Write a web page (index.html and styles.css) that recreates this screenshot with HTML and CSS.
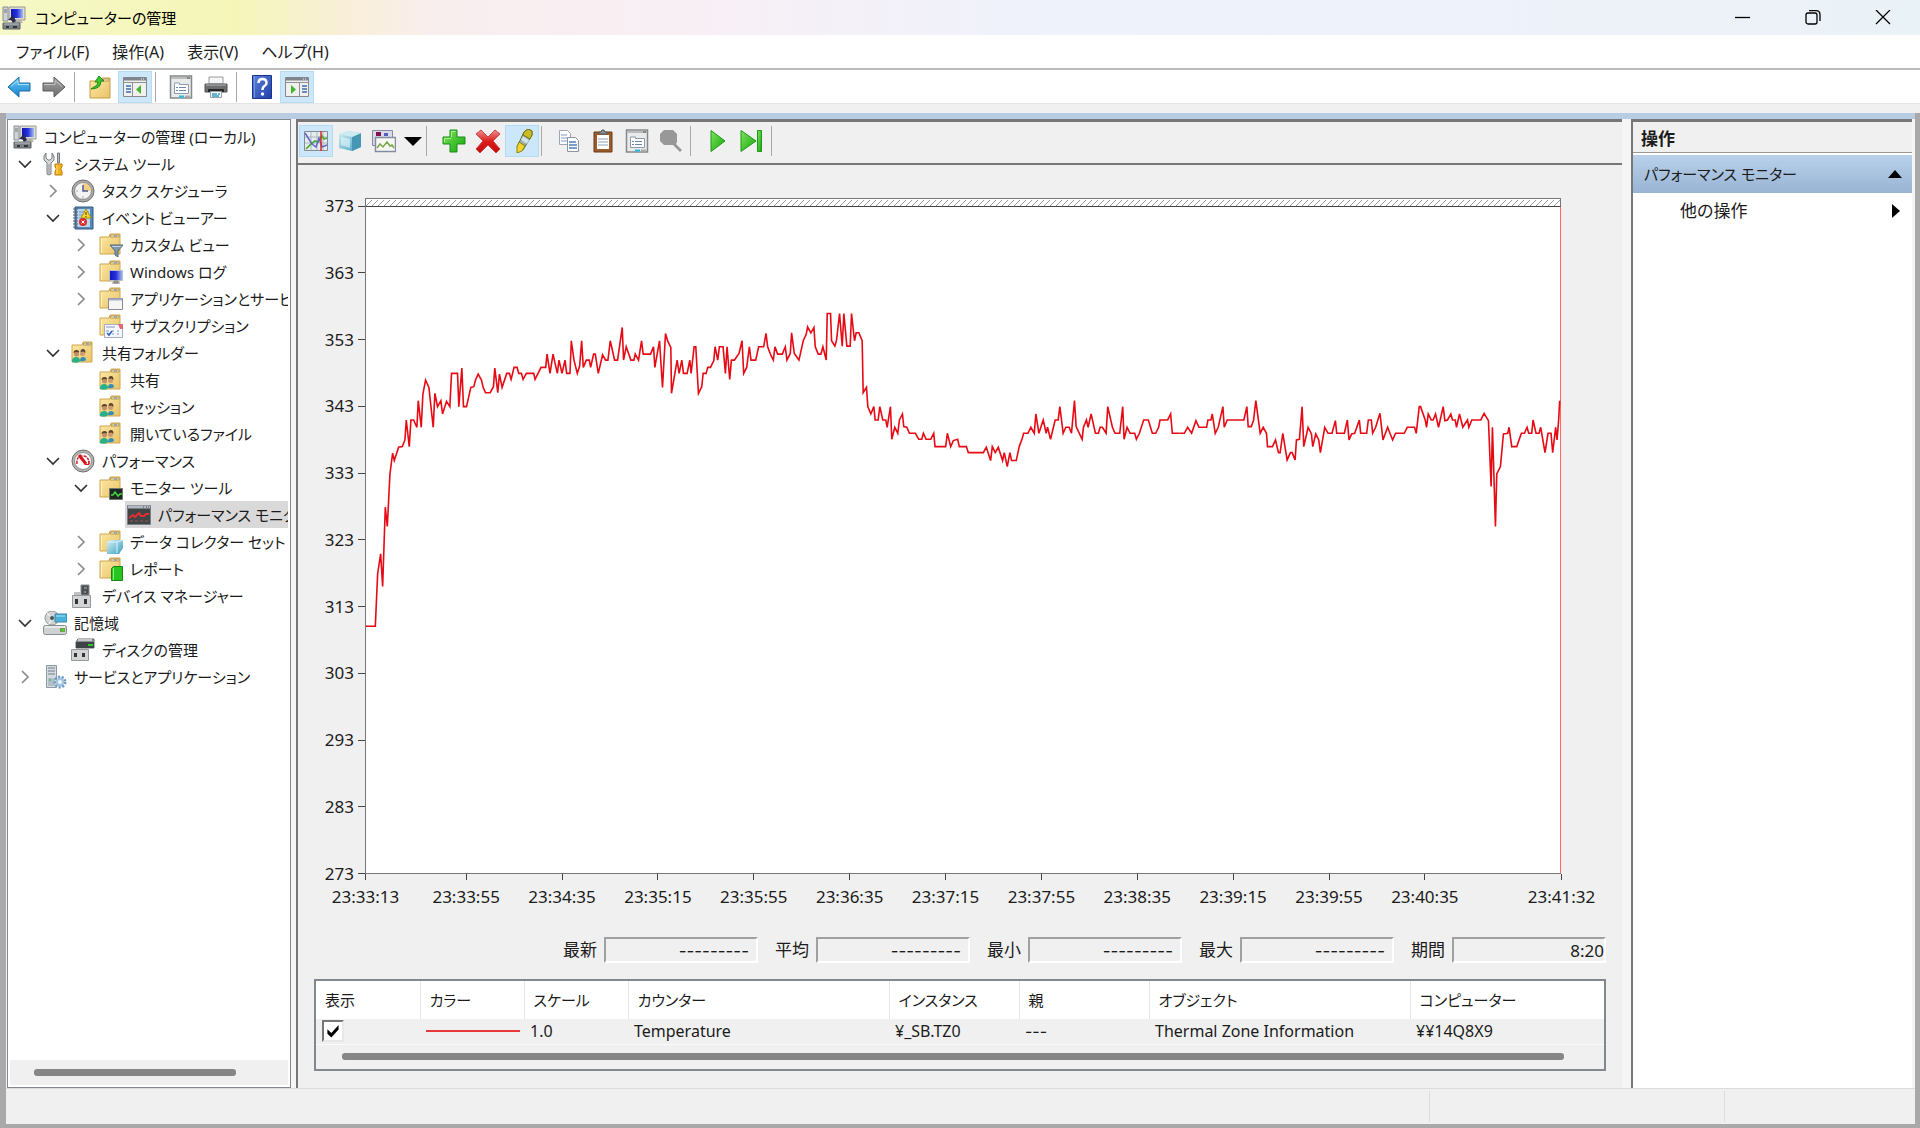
FILE: index.html
```html
<!DOCTYPE html>
<html lang="ja">
<head>
<meta charset="utf-8">
<title>コンピューターの管理</title>
<link rel="stylesheet" href="styles.css">
</head>
<body>
<svg class="sprite" aria-hidden="true">
  <defs>
    <linearGradient id="gFolder" x1="0" y1="0" x2="1" y2="1"><stop offset="0" stop-color="#fdeaa5"/><stop offset="1" stop-color="#e8c268"/></linearGradient>
    <linearGradient id="gScreen" x1="0" y1="0" x2="1" y2="0"><stop offset="0" stop-color="#0e16b8"/><stop offset="0.5" stop-color="#2733d8"/><stop offset="1" stop-color="#a9bdf4"/></linearGradient>
    <linearGradient id="gBlue" x1="0" y1="0" x2="0" y2="1"><stop offset="0" stop-color="#6cc8f4"/><stop offset="1" stop-color="#1583d0"/></linearGradient>
    <linearGradient id="gGrey" x1="0" y1="0" x2="0" y2="1"><stop offset="0" stop-color="#a5a5a5"/><stop offset="1" stop-color="#6d6d6d"/></linearGradient>
    <linearGradient id="gGreen" x1="0" y1="0" x2="1" y2="1"><stop offset="0" stop-color="#7fe45c"/><stop offset="1" stop-color="#14a50c"/></linearGradient>
    <linearGradient id="gRed" x1="0" y1="0" x2="0" y2="1"><stop offset="0" stop-color="#f09090"/><stop offset="0.5" stop-color="#dc1c1c"/><stop offset="1" stop-color="#c40c0c"/></linearGradient>
    <linearGradient id="gCube" x1="0" y1="0" x2="1" y2="1"><stop offset="0" stop-color="#d6f0f6"/><stop offset="1" stop-color="#3a9fc0"/></linearGradient>
    <linearGradient id="gHelp" x1="0" y1="0" x2="1" y2="1"><stop offset="0" stop-color="#5f86dc"/><stop offset="1" stop-color="#1f3ea8"/></linearGradient>
  </defs>
  <symbol id="computer" viewBox="0 0 24 24">
    <path d="M1 1h5v14H1z" fill="#cfd3d6" stroke="#8b9094"/><path d="M2 4h3M2 6h3" stroke="#777"/>
    <path d="M7 1h16v13H7z" fill="#dcdcd4" stroke="#9a9a92"/><path d="M9 3h12v9H9z" fill="url(#gScreen)"/><path d="M12 14h7l2 3H10z" fill="#b4b4ac"/>
    <path d="M6 14l5-5 3 6-3 2-2-3z" fill="#282c50"/><path d="M1 17h17v6H1z" fill="#7d8386" stroke="#5d6366"/><path d="M2 18h15" stroke="#b9bec0"/><path d="M4 20h3v2H4zm7 0h4v2h-4z" fill="#323639"/>
  </symbol>
  <symbol id="tools" viewBox="0 0 24 24">
    <path d="M3 1v5l2 2h2l2-2V1l2 3v4l-3 3v11q-2 2-4 0V11L1 8V4z" fill="#d5d8da" stroke="#7a7f83"/><path d="M6 12v10" stroke="#8e9498"/>
    <path d="M14.500 1h2v10h-2z" fill="#b9bdc0" stroke="#74797c"/><path d="M12 12h7v3l-1 1v2l1 1v4h-7v-4l1-1v-2l-1-1z" fill="#f6b21b" stroke="#b87c0a"/><path d="M14 13v9" stroke="#ffe08a"/>
  </symbol>
  <symbol id="clock" viewBox="0 0 24 24">
    <circle cx="12" cy="12" r="11" fill="#ababab" stroke="#707070"/><circle cx="12" cy="12" r="8.500" fill="#f3f3f3" stroke="#8b8b8b"/><path d="M12 12V4a8 8 0 0 1 8 8z" fill="#f3cf84"/><path d="M12 6v6h5" fill="none" stroke="#4c5c92" stroke-width="1.500"/><path d="M12 17v3M5 12h2" stroke="#aaa"/>
  </symbol>
  <symbol id="events" viewBox="0 0 24 24">
    <path d="M4 1h18v22H4z" fill="#5588b8" stroke="#35597e"/><path d="M6 3h13v18H6z" fill="#b9d3ea"/><path d="M2 3h5M2 6h5M2 9h5M2 12h5M2 15h5M2 18h5M2 21h5" stroke="#54606c"/><path d="M8 6h10M8 9h10M8 12h10" stroke="#749cc4"/>
    <path d="M15 3l5 9H10z" fill="#fadc28" stroke="#b19205"/><path d="M15 6v3M15 10v1" stroke="#333"/><circle cx="12" cy="16" r="4" fill="#dc2b2b"/><path d="M10.500 14.500l3 3m0-3l-3 3" stroke="#fff"/>
  </symbol>
  <symbol id="folder" viewBox="0 0 24 24">
    <path d="M1 4h9l1-3h10v20H1z" fill="url(#gFolder)" stroke="#cfa750"/><path d="M11 4h9V2h-8z" fill="#fff6d4" stroke="#b59552"/><path d="M15 3h3" stroke="#5e8ab8"/><path d="M2.500 6v14" stroke="#fff3c2"/>
  </symbol>
  <symbol id="folder-filter" viewBox="0 0 24 24"><use href="#folder"/><path d="M11 12h13l-5 6v6l-3-2v-4z" fill="#7d97ab" stroke="#566c7d"/><path d="M13 13.500h9" stroke="#c6d6e2"/></symbol>
  <symbol id="folder-screen" viewBox="0 0 24 24"><use href="#folder"/><path d="M10.500 10.500h13v10h-13z" fill="url(#gScreen)" stroke="#b8bec8"/><path d="M15 21h4v2h-4zM13 23h8" fill="#999" stroke="#888"/></symbol>
  <symbol id="folder-window" viewBox="0 0 24 24"><use href="#folder"/><path d="M9.500 11.500h14v11h-14z" fill="#f6f6f4" stroke="#888a9a"/><path d="M10 12.500h13" stroke="#a6acc8" stroke-width="2"/></symbol>
  <symbol id="folder-sheet" viewBox="0 0 24 24"><use href="#folder"/><path d="M5.500 10.500h18v13h-18z" fill="#f5f8fc" stroke="#a5afbd"/><path d="M7 13h9M7 17h3m3 0h2m3 0h2M13 20h2m3 0h2" stroke="#8493c9"/><path d="M19 10h5v5h-3z" fill="#e56a70"/><path d="M8 19l2 2 3-4" fill="none" stroke="#285bc4" stroke-width="1.500"/></symbol>
  <symbol id="folder-share" viewBox="0 0 24 24"><path d="M1 4h10l1-3h9v20H1z" fill="url(#gFolder)" stroke="#cfa750"/><path d="M12 4h8V2h-7z" fill="#fff6d4" stroke="#b59552"/><path d="M15 3h3" stroke="#5e8ab8"/><path d="M1 19q1-3 4-3 4 0 4 4-2 3-8 1z" fill="#28b088"/><path d="M9 20q0-4 3-4t3 3q-2 2-6 1z" fill="#338fb6"/><circle cx="5.500" cy="13" r="2.500" fill="#c09068"/><circle cx="11.500" cy="12.500" r="2.500" fill="#cc9a6b"/><path d="M2.500 12q0-3 3-3t2.500 2.500L5 11zm7-1q0-3 2.500-3t2.500 4l-2-1.500z" fill="#5a4330"/></symbol>
  <symbol id="gauge" viewBox="0 0 24 24"><circle cx="12" cy="12" r="11" fill="#b5b5b5" stroke="#6f6f6f"/><circle cx="12" cy="12" r="8.500" fill="#fff" stroke="#8c8c8c"/><path d="M6 15q-1-8 6-8 6 0 6 8" fill="none" stroke="#c5262a" stroke-width="1.500" stroke-dasharray="3 1"/><path d="M8 6l7 9" stroke="#d8141a" stroke-width="3"/><path d="M14 15.500h4v-4" fill="none" stroke="#d8141a"/></symbol>
  <symbol id="folder-monitor" viewBox="0 0 24 24"><use href="#folder"/><path d="M10.500 12.500h13v11h-13z" fill="#1e2822" stroke="#727674"/><path d="M12 19h2l2-3 3 4 2-2h2" fill="none" stroke="#44d83c" stroke-width="1.500"/></symbol>
  <symbol id="perfmon" viewBox="0 0 24 24"><path d="M.5 2.500h23v19H.5z" fill="#3f4444" stroke="#7b7f88"/><path d="M1 4h22" stroke="#b4b8c4" stroke-width="3"/><path d="M16 4h1m2 0h1m1 0h1" stroke="#4d5260"/><path d="M2 15l4-3 2 2 4-4 2 3h3l2-2h3" fill="none" stroke="#e22d35" stroke-width="2"/><path d="M3 18h3m2 0h3m2 0h3m2 0h3" stroke="#a35454"/></symbol>
  <symbol id="folder-data" viewBox="0 0 24 24"><use href="#folder"/><path d="M8 12l4-2h12v8l-4 6H8z" fill="url(#gCube)"/><path d="M8 12h10v11M18 12l6-2" fill="none" stroke="#daf2fa"/></symbol>
  <symbol id="folder-report" viewBox="0 0 24 24"><use href="#folder"/><path d="M12.500 11.500l2-2h9v14h-11z" fill="#28c420" stroke="#168812"/><path d="M14.500 11v12" stroke="#8bf07b"/></symbol>
  <symbol id="device" viewBox="0 0 24 24"><path d="M10 1h8v10h-8z" fill="#4b5154" stroke="#85898b"/><path d="M13 4h3M13 8h2" stroke="#b8bec0"/><path d="M1.500 11.500h18v12h-18z" fill="#d3d4d6" stroke="#96989b"/><path d="M3 8h6v3H3z" fill="#bfc2c4"/><path d="M4 15h3v5H4zm9 0h3v5h-3z" fill="#313538"/></symbol>
  <symbol id="storage" viewBox="0 0 24 24"><circle cx="9" cy="7" r="7" fill="#d1d5d2" stroke="#91979a"/><path d="M9 7L4 2m5 5l-3 6" stroke="#fff"/><circle cx="9" cy="7" r="2" fill="#49565d"/><path d="M12 3h12v8H12z" fill="#48b1dc" stroke="#4384a6"/><path d="M13 5h9" stroke="#a6e4fb"/><rect x="0.500" y="14.500" width="23" height="9" rx="2" fill="#cfd2d3" stroke="#888d90"/><path d="M2 16h20" stroke="#fff"/><path d="M17 17h5v4h-5z" fill="#729f4b"/><path d="M19 18h2v2h-2z" fill="#41e21f"/></symbol>
  <symbol id="disk" viewBox="0 0 24 24"><path d="M5 4l2-3h16v9H5z" fill="#898e90" stroke="#666b6d"/><path d="M5 4h18v6H5z" fill="#3e4345"/><path d="M7 2h14" stroke="#c5c8ca" stroke-width="2"/><path d="M17 7h5" stroke="#31c634" stroke-width="2"/><path d="M.5 11.500h17v11H.5z" fill="#d3d4d6" stroke="#96989b"/><path d="M3 15h3v4H3zm8 0h3v4h-3z" fill="#313538"/></symbol>
  <symbol id="services" viewBox="0 0 24 24"><path d="M3.500.5h10v22h-10z" fill="#d5dce1" stroke="#8c99a3"/><path d="M5 3h7M5 6h7M5 9h7" stroke="#6e7c86"/><path d="M5 13h7v8H5z" fill="#b1bfc9"/><path d="M6 15h2" stroke="#2db53a"/><circle cx="17" cy="17" r="5" fill="#c9dcec" stroke="#6f9dc1" stroke-width="3" stroke-dasharray="2 1.500"/><circle cx="17" cy="17" r="4" fill="#a5c5de"/><circle cx="17" cy="17" r="2" fill="#f3f8fc"/></symbol>
  <symbol id="arrow-left" viewBox="0 0 24 24"><path d="M1 12L12 2v6h11v8H12v6z" fill="url(#gBlue)" stroke="#1a6fa6"/><path d="M4 11.500l7-6v4h11" fill="none" stroke="#a6e0fa"/></symbol>
  <symbol id="arrow-right" viewBox="0 0 24 24"><path d="M23 12L12 2v6H1v8h11v6z" fill="url(#gGrey)" stroke="#5b5b5b"/><path d="M2 9.500h11v-4l7 6" fill="none" stroke="#c4c4c4"/></symbol>
  <symbol id="folder-up" viewBox="0 0 24 24"><path d="M2 6h10l2-3h8v20H2z" fill="url(#gFolder)" stroke="#c79c44"/><path d="M14 6h7V4h-5z" fill="#fff6d4" stroke="#b59552"/><path d="M3 14l3-2q4-1 4-5H7l4-6 5 5h-3q0 8-10 8z" fill="#3cc62b" stroke="#23891a"/></symbol>
  <symbol id="pane-left" viewBox="0 0 24 24"><path d="M.5 2.500h23v19H.5z" fill="#f0f0ee" stroke="#868a90"/><path d="M1 4h22" stroke="#7f858d" stroke-width="3"/><path d="M18 4h4" stroke="#eee" stroke-dasharray="1 1"/><path d="M1 7.500h22M9.500 8v13" stroke="#8d9196"/><path d="M3 11h5M3 14h5M3 17h5" stroke="#3b6cae" stroke-width="1.500"/><path d="M18 10v9l-5-4.500z" fill="#44b32f"/></symbol>
  <symbol id="pane-right" viewBox="0 0 24 24"><path d="M.5 2.500h23v19H.5z" fill="#f0f0ee" stroke="#868a90"/><path d="M1 4h22" stroke="#7f858d" stroke-width="3"/><path d="M18 4h4" stroke="#eee" stroke-dasharray="1 1"/><path d="M1 7.500h22M14.500 8v13" stroke="#8d9196"/><path d="M17 11h5M17 14h5M17 17h5" stroke="#3b6cae" stroke-width="1.500"/><path d="M6 10v9l5-4.500z" fill="#44b32f"/></symbol>
  <symbol id="props" viewBox="0 0 24 24"><path d="M1.500 1h21v22h-21z" fill="#e9eaea" stroke="#85898b" stroke-width="1.500"/><path d="M2 3h20" stroke="#bbb" stroke-width="2"/><path d="M18 3h3" stroke="#555"/><path d="M5.500 9.500V8h5v1.500h9v9h-14z" fill="#fff" stroke="#8d98a8"/><path d="M7 12.500h2m1 0h7M7 15.500h2m1 0h7" stroke="#6886ae"/><path d="M10 21.500h5" stroke="#24bce0" stroke-width="2"/><path d="M16 21.500h5" stroke="#aaa" stroke-width="2"/></symbol>
  <symbol id="printer" viewBox="0 0 24 24"><path d="M5 2h14v7H5z" fill="#f5f5f5" stroke="#9d9d9d"/><path d="M1 9h22v8H1z" fill="#6c6e70" stroke="#515354"/><path d="M2 10h20" stroke="#b4b6b8"/><path d="M4 14h16v3H4z" fill="#252729"/><path d="M6.500 16.500h11v6h-11z" fill="#f5fafd" stroke="#9aa0a4"/><path d="M8 19h5m1 0h2M8 21h7" stroke="#369dc8" stroke-width="1.500"/></symbol>
  <symbol id="help" viewBox="0 0 24 24"><path d="M2.500.5h19v23h-19z" fill="url(#gHelp)" stroke="#1a3487"/><path d="M4.500 1v22" stroke="#6e91e0"/><path d="M8.500 8q0-4 4-4t4 4q0 2-2 3-2 1-2 4" fill="none" stroke="#fff" stroke-width="2.500"/><circle cx="12.500" cy="19" r="1.700" fill="#fff"/></symbol>
  <symbol id="chart-view" viewBox="0 0 24 24"><path d="M.5 2.500h23v19H.5z" fill="#e5ecee" stroke="#858c98"/><path d="M1 8h22M1 14h22M7 3v18M13 3v18M19 3v18" stroke="#aeb8c2"/><path d="M2 20l5-5 4-3 3 1 4-6 2 3 3-1" fill="none" stroke="#47ae32" stroke-width="1.700"/><path d="M1 4l7 11 4 3 3-9 3 9 5-2" fill="none" stroke="#6266c8" stroke-width="1.500"/><path d="M17 2v20" stroke="#d42d2d" stroke-width="1.500"/></symbol>
  <symbol id="cube" viewBox="0 0 24 24"><path d="M1 5l9-3 13 2v14l-9 4L1 19z" fill="url(#gCube)"/><path d="M14 8l9-4v14l-9 4z" fill="#4597b4"/><path d="M1 5l9-3 13 2-9 4z" fill="#cdecf2"/><path d="M3 8l9 2v9l-9-3z" fill="#e8f7fa" opacity=".6"/></symbol>
  <symbol id="gallery" viewBox="0 0 24 24"><path d="M.5 1.500h20v15H.5z" fill="#d9dce7" stroke="#858ba5"/><path d="M4 3h5v4H4z" fill="#801050"/><path d="M12 4h4v3h-4z" fill="#5360bd"/><path d="M3.500 8.500h20v14h-20z" fill="#f6f8f4" stroke="#858ba5" stroke-width="1.500"/><path d="M5 19l3-4 3 3 4-5 3 4 2-1 2 3" fill="none" stroke="#78a845" stroke-width="1.500"/></symbol>
  <symbol id="plus" viewBox="0 0 24 24"><path d="M8 1h7v7h8v7h-8v8H8v-8H1V8h7z" fill="url(#gGreen)" stroke="#1b8d18"/><path d="M9.500 8V2.500h4M2.500 13V9.500H9" fill="none" stroke="#a8f48d"/></symbol>
  <symbol id="cross" viewBox="0 0 24 24"><path d="M5 1l7 7 7-7 5 4-7 7 7 8-4 4-8-8-8 8-4-4 7-8-7-7z" fill="url(#gRed)" stroke="#c54444"/></symbol>
  <symbol id="marker" viewBox="0 0 24 24"><path d="M14 3l4-3 4 2v4l-9 15-6-3z" fill="#9fb0a0" stroke="#686d3a"/><path d="M14 3l4-3 4 2v4l-2 4-7-4z" fill="#c8bd22" stroke="#77701b"/><path d="M9 13l6 4-3 5-5 2v-6z" fill="#f0d72a" stroke="#8f8019"/><path d="M12 9l6 4" stroke="#cfe2f0" stroke-width="4"/></symbol>
  <symbol id="copy" viewBox="0 0 24 24"><path d="M2.500 1.500h8l3 3v11h-11z" fill="#fff" stroke="#9ea5ae"/><path d="M4 6h6M4 9h7M4 12h7" stroke="#7a9bcc"/><path d="M10.500 8.500h8l3 3v11h-11z" fill="#fff" stroke="#8c949e"/><path d="M12 13h7M12 16h8M12 19h8" stroke="#4c7dbd" stroke-width="1.500"/></symbol>
  <symbol id="paste" viewBox="0 0 24 24"><path d="M3 3h18v20H3z" fill="#9a5c2c" stroke="#6b3b17"/><path d="M6 6h12v14H6z" fill="#fff"/><path d="M7 10h10M7 13h10M7 16h10" stroke="#91a5ba"/><path d="M8 5V3h2l1-2h2l1 2h2v2z" fill="#888d91" stroke="#54585b"/></symbol>
  <symbol id="search" viewBox="0 0 24 24"><path d="M5 1h9l4 4v8l-1 2 6 6-2 2-7-7H5l-4-4V5z" fill="#989898"/></symbol>
  <symbol id="play" viewBox="0 0 24 24"><path d="M5 1.500L19 12 5 22.500z" fill="url(#gGreen)" stroke="#1a9a15"/></symbol>
  <symbol id="step" viewBox="0 0 24 24"><path d="M1 1.500L16 12 1 22.500z" fill="url(#gGreen)" stroke="#1a9a15"/><path d="M17.500 1.500h4v21h-4z" fill="url(#gGreen)" stroke="#1a9a15"/></symbol>
  <symbol id="chev-down" viewBox="0 0 20 20"><path d="M4 7l6 6 6-6" fill="none" stroke="#333" stroke-width="1.700"/></symbol>
  <symbol id="chev-right" viewBox="0 0 20 20"><path d="M7 4l6 6-6 6" fill="none" stroke="#8c8c8c" stroke-width="1.700"/></symbol>
</svg>

<header class="titlebar">
  <svg class="icon"><use href="#computer"/></svg>
  <h1 class="titlebar-text">コンピューターの管理</h1>
  <div class="window-buttons">
    <button class="window-button" aria-label="最小化"><svg class="window-glyph" viewBox="0 0 16 16"><path d="M0 7.500h15"/></svg></button>
    <button class="window-button" aria-label="元に戻す"><svg class="window-glyph" viewBox="0 0 16 16"><rect x="1" y="3" width="11" height="11" rx="2"/><path d="M4 .7h7q4 0 4 4V11"/></svg></button>
    <button class="window-button" aria-label="閉じる"><svg class="window-glyph" viewBox="0 0 16 16"><path d="M1 0l14 14M15 0L1 14"/></svg></button>
  </div>
</header>

<nav class="menubar">
  <button class="menu">ファイル(F)</button>
  <button class="menu">操作(A)</button>
  <button class="menu">表示(V)</button>
  <button class="menu">ヘルプ(H)</button>
</nav>

<div class="toolbar" role="toolbar" aria-label="標準">
  <button class="tool" aria-label="戻る"><svg class="icon"><use href="#arrow-left"/></svg></button>
  <button class="tool" aria-label="進む"><svg class="icon"><use href="#arrow-right"/></svg></button>
  <span class="tool-sep"></span>
  <button class="tool" aria-label="上へ"><svg class="icon"><use href="#folder-up"/></svg></button>
  <button class="tool tool-on" aria-label="コンソール ツリー"><svg class="icon"><use href="#pane-left"/></svg></button>
  <span class="tool-sep"></span>
  <button class="tool" aria-label="プロパティ"><svg class="icon"><use href="#props"/></svg></button>
  <button class="tool" aria-label="印刷"><svg class="icon"><use href="#printer"/></svg></button>
  <span class="tool-sep"></span>
  <button class="tool" aria-label="ヘルプ"><svg class="icon"><use href="#help"/></svg></button>
  <button class="tool tool-on" aria-label="操作ウィンドウ"><svg class="icon"><use href="#pane-right"/></svg></button>
</div>

<main class="frame">
  <div class="panes">
    <nav class="tree-pane">
      <div class="tree-view">
      <ul class="tree">
        <li><div class="node"><svg class="icon"><use href="#computer"/></svg><span>コンピューターの管理 (ローカル)</span></div>
          <ul class="branch">
            <li><div class="node"><svg class="chev"><use href="#chev-down"/></svg><svg class="icon"><use href="#tools"/></svg><span>システム ツール</span></div>
              <ul class="branch">
                <li><div class="node"><svg class="chev"><use href="#chev-right"/></svg><svg class="icon"><use href="#clock"/></svg><span>タスク スケジューラ</span></div></li>
                <li><div class="node"><svg class="chev"><use href="#chev-down"/></svg><svg class="icon"><use href="#events"/></svg><span>イベント ビューアー</span></div>
                  <ul class="branch">
                    <li><div class="node"><svg class="chev"><use href="#chev-right"/></svg><svg class="icon"><use href="#folder-filter"/></svg><span>カスタム ビュー</span></div></li>
                    <li><div class="node"><svg class="chev"><use href="#chev-right"/></svg><svg class="icon"><use href="#folder-screen"/></svg><span>Windows ログ</span></div></li>
                    <li><div class="node"><svg class="chev"><use href="#chev-right"/></svg><svg class="icon"><use href="#folder-window"/></svg><span>アプリケーションとサービス ログ</span></div></li>
                    <li><div class="node"><svg class="chev"></svg><svg class="icon"><use href="#folder-sheet"/></svg><span>サブスクリプション</span></div></li>
                  </ul></li>
                <li><div class="node"><svg class="chev"><use href="#chev-down"/></svg><svg class="icon"><use href="#folder-share"/></svg><span>共有フォルダー</span></div>
                  <ul class="branch">
                    <li><div class="node"><svg class="chev"></svg><svg class="icon"><use href="#folder-share"/></svg><span>共有</span></div></li>
                    <li><div class="node"><svg class="chev"></svg><svg class="icon"><use href="#folder-share"/></svg><span>セッション</span></div></li>
                    <li><div class="node"><svg class="chev"></svg><svg class="icon"><use href="#folder-share"/></svg><span>開いているファイル</span></div></li>
                  </ul></li>
                <li><div class="node"><svg class="chev"><use href="#chev-down"/></svg><svg class="icon"><use href="#gauge"/></svg><span>パフォーマンス</span></div>
                  <ul class="branch">
                    <li><div class="node"><svg class="chev"><use href="#chev-down"/></svg><svg class="icon"><use href="#folder-monitor"/></svg><span>モニター ツール</span></div>
                      <ul class="branch branch-leaf">
                        <li><div class="node node-selected"><svg class="icon"><use href="#perfmon"/></svg><span>パフォーマンス モニター</span></div></li>
                      </ul></li>
                    <li><div class="node"><svg class="chev"><use href="#chev-right"/></svg><svg class="icon"><use href="#folder-data"/></svg><span>データ コレクター セット</span></div></li>
                    <li><div class="node"><svg class="chev"><use href="#chev-right"/></svg><svg class="icon"><use href="#folder-report"/></svg><span>レポート</span></div></li>
                  </ul></li>
                <li><div class="node"><svg class="chev"></svg><svg class="icon"><use href="#device"/></svg><span>デバイス マネージャー</span></div></li>
              </ul></li>
            <li><div class="node"><svg class="chev"><use href="#chev-down"/></svg><svg class="icon"><use href="#storage"/></svg><span>記憶域</span></div>
              <ul class="branch">
                <li><div class="node"><svg class="chev"></svg><svg class="icon"><use href="#disk"/></svg><span>ディスクの管理</span></div></li>
              </ul></li>
            <li><div class="node"><svg class="chev"><use href="#chev-right"/></svg><svg class="icon"><use href="#services"/></svg><span>サービスとアプリケーション</span></div></li>
          </ul></li>
      </ul>
      </div>
      <div class="tree-scroll"><div class="thumb"></div></div>
    </nav>

    <section class="monitor">
      <div class="monitor-tools" role="toolbar" aria-label="パフォーマンス モニター">
        <button class="tool tool-on" aria-label="現在の利用状況"><svg class="icon"><use href="#chart-view"/></svg></button>
        <button class="tool" aria-label="ログ データ"><svg class="icon"><use href="#cube"/></svg></button>
        <button class="tool" aria-label="グラフの種類"><svg class="icon"><use href="#gallery"/></svg></button>
        <button class="tool tool-caret" aria-label="種類の一覧"><svg class="caret" viewBox="0 0 18 9"><path d="M0 0h18L9 9z"/></svg></button>
        <span class="tool-sep"></span>
        <button class="tool" aria-label="追加"><svg class="icon"><use href="#plus"/></svg></button>
        <button class="tool" aria-label="削除"><svg class="icon"><use href="#cross"/></svg></button>
        <button class="tool tool-on" aria-label="強調表示"><svg class="icon"><use href="#marker"/></svg></button>
        <span class="tool-sep"></span>
        <button class="tool" aria-label="コピー"><svg class="icon"><use href="#copy"/></svg></button>
        <button class="tool" aria-label="貼り付け"><svg class="icon"><use href="#paste"/></svg></button>
        <button class="tool" aria-label="プロパティ"><svg class="icon"><use href="#props"/></svg></button>
        <button class="tool" aria-label="ズーム"><svg class="icon"><use href="#search"/></svg></button>
        <span class="tool-sep"></span>
        <button class="tool" aria-label="再開"><svg class="icon"><use href="#play"/></svg></button>
        <button class="tool" aria-label="更新"><svg class="icon"><use href="#step"/></svg></button>
        <span class="tool-sep"></span>
      </div>

      <div class="chart">
        <div class="axis-y">
          <span>373</span><span>363</span><span>353</span><span>343</span><span>333</span><span>323</span><span>313</span><span>303</span><span>293</span><span>283</span><span>273</span>
        </div>
        <div class="plot">
          <svg class="hatch" width="100%" height="8"><defs><pattern id="hatch" width="6" height="8" patternUnits="userSpaceOnUse"><path d="M-1 8L7 0" stroke="#999"/></pattern></defs><rect width="100%" height="8" fill="url(#hatch)"/></svg>
          <svg class="series" viewBox="0 0 3588 2000" preserveAspectRatio="none" role="img" aria-label="Temperature">
            <g transform="translate(-15 282)"><polyline points="15,978 43,978 50,820 59,760 65,858 73,620 79,678 87,520 95,458 100,480 113,440 124,438 132,418 136,358 145,438 150,358 158,358 168,380 172,300 181,380 186,280 194,238 204,260 217,380 222,278 230,318 240,300 245,340 257,302 267,318 272,218 290,218 294,318 303,202 308,318 317,318 330,260 339,258 344,238 352,220 362,238 367,260 374,276 388,276 398,258 402,202 411,276 416,220 424,260 438,218 446,218 451,236 460,200 469,200 474,218 482,218 487,236 497,218 519,218 523,236 541,200 555,200 559,160 568,218 577,160 590,218 595,178 604,218 613,178 618,218 628,218 632,120 640,178 650,218 657,196 663,120 668,200 677,178 686,178 690,200 699,160 704,160 713,218 726,162 735,178 742,178 749,120 762,178 771,178 785,80 789,178 797,138 811,178 820,178 824,160 834,178 843,120 848,160 870,160 879,138 883,200 897,120 906,260 915,98 922,122 931,140 933,278 950,178 956,218 964,178 969,218 980,218 988,178 992,218 1001,138 1006,138 1014,278 1024,258 1028,218 1037,218 1042,200 1050,200 1060,180 1064,138 1072,178 1077,138 1088,138 1095,218 1100,138 1108,236 1113,178 1122,178 1136,158 1145,120 1150,218 1159,200 1167,138 1172,178 1186,178 1195,138 1210,138 1217,98 1222,138 1230,160"/></g>
            <g transform="translate(1215 252)"><polyline points="0,190 9,208 14,168 22,190 36,190 45,168 50,208 60,188 64,126 72,188 86,208 99,150 108,130 112,108 122,126 131,110 135,168 144,190 152,190 158,168 168,208 171,68 181,68 184,150 194,166 199,148 208,68 216,166 221,68 230,166 240,166 244,68 253,150 258,126 266,126 276,150 279,306 289,290 293,348 302,370 311,348 315,388 324,388 329,348 338,388 347,388 351,410 361,348 365,446 374,410 383,428 388,388 397,370 401,408 410,410 418,428 436,428 446,446 455,446 460,428 468,446 482,446 491,428 495,468 527,468 532,428 542,468 550,450 563,446 568,468 589,468 595,486 640,486 649,470 662,510 667,468 676,486 685,470 698,510 703,486 712,528 720,486 725,510 739,510 748,468 757,444 761,428 774,428 783,410 793,428 798,370 807,428 820,388 829,428 833,410 842,446 856,388 865,388 870,348 880,428 888,410 898,410 905,428 914,330 919,408 937,446 941,410 950,388 955,410 964,370 977,428 986,428 991,410 998,410 1009,428 1014,348 1028,410 1036,428 1050,428 1059,348 1063,446 1072,410 1081,428 1095,428 1100,446 1109,428 1122,388 1136,388 1148,428 1158,428 1167,410 1171,388 1194,388 1203,370 1208,428 1230,428"/></g>
            <g transform="translate(2445 522)"><polyline points="0,158 14,158 24,140 36,158 49,120 58,140 81,140 85,118 94,118 98,100 107,158 116,140 130,78 134,140 143,118 193,118 202,78 206,138 215,138 222,120 229,60 242,158 251,140 261,158 264,198 279,198 288,178 297,216 302,216 310,158 323,238 333,216 338,216 347,238 351,178 360,176 368,78 373,198 386,140 396,160 400,198 409,160 418,178 423,216 436,140 446,158 458,158 468,120 472,158 495,158 504,118 509,178 517,160 526,158 540,118 544,158 562,158 567,118 576,118 580,158 589,140 602,98 611,178 625,140 640,178 649,158 675,158 684,140 706,140 711,158 720,78 724,78 738,118 742,140 747,100 756,118 762,118 769,100 778,140 792,78 797,120 805,118 815,100 820,118 828,118 832,140 841,100 851,140 865,118 869,140 878,118 905,118 915,98 928,120 936,318 940,140 949,438 953,280 964,258 973,160 986,158 990,140 998,198 1013,198 1027,158 1036,158 1044,140 1049,158 1058,158 1062,118 1071,158 1080,158 1085,140 1098,216 1107,158 1116,158 1121,216 1130,140 1134,178 1139,118 1142,60"/></g>
          </svg>
        </div>
        <div class="axis-x">
          <span>23:33:13</span><span>23:33:55</span><span>23:34:35</span><span>23:35:15</span><span>23:35:55</span><span>23:36:35</span><span>23:37:15</span><span>23:37:55</span><span>23:38:35</span><span>23:39:15</span><span>23:39:55</span><span>23:40:35</span><span>23:41:32</span>
        </div>
      </div>

      <div class="stats">
        <div class="stat"><label for="st-last">最新</label><output id="st-last" class="blank">---------</output></div>
        <div class="stat"><label for="st-avg">平均</label><output id="st-avg" class="blank">---------</output></div>
        <div class="stat"><label for="st-min">最小</label><output id="st-min" class="blank">---------</output></div>
        <div class="stat"><label for="st-max">最大</label><output id="st-max" class="blank">---------</output></div>
        <div class="stat"><label for="st-dur">期間</label><output id="st-dur" class="stat-duration">8:20</output></div>
      </div>

      <div class="legend">
        <table class="counters">
          <colgroup><col class="c-small"><col class="c-small"><col class="c-small"><col class="c-wide"><col class="c-mid"><col class="c-mid"><col class="c-wide"><col></colgroup>
          <thead><tr><th>表示</th><th>カラー</th><th>スケール</th><th>カウンター</th><th>インスタンス</th><th>親</th><th>オブジェクト</th><th>コンピューター</th></tr></thead>
          <tbody><tr><td><input class="check" type="checkbox" checked aria-label="Temperature を表示"></td><td class="color-cell"><div class="swatch"></div></td><td>1.0</td><td>Temperature</td><td>¥_SB.TZ0</td><td class="blank">---</td><td>Thermal Zone Information</td><td>¥¥14Q8X9</td></tr></tbody>
        </table>
        <div class="legend-scroll"><div class="thumb"></div></div>
      </div>
    </section>

    <aside class="actions">
      <h2 class="actions-title">操作</h2>
      <button class="actions-group"><span>パフォーマンス モニター</span><svg class="tri-up" viewBox="0 0 14 8"><path d="M0 8h14L7 0z"/></svg></button>
      <button class="actions-item"><span>他の操作</span><svg class="tri-right" viewBox="0 0 8 14"><path d="M0 0v14l8-7z"/></svg></button>
    </aside>
  </div>
  <footer class="statusbar"><span class="status-main"></span><span class="status-mid"></span><span class="status-end"></span></footer>
</main>
</body>
</html>
```
FILE: styles.css
```css
* { box-sizing: border-box; }

body {
  display: flex;
  flex-direction: column;
  min-height: 100vh;
  margin: 0;
  background: #f0f0f0;
  color: #1b1b1b;
  font: 17px/24px "Noto Sans", "Noto Sans CJK JP", sans-serif;
  font-feature-settings: "palt";
}

button {
  padding: 0;
  border: 0;
  background: none;
  color: inherit;
  font: inherit;
  font-feature-settings: inherit;
  white-space: nowrap;
}

ul { margin: 0; padding: 0; list-style: none; }
svg { display: block; flex: none; }
.sprite { position: absolute; width: 0; height: 0; }
.icon { width: 24px; height: 24px; }

/* Title bar */
.titlebar {
  display: flex;
  align-items: center;
  gap: 9px;
  height: 35px;
  padding: 0 2px;
  background: linear-gradient(90deg, #f6f8c6 0, #f5f6b8 12%, #f9efd8 18%, #f9eeee 23%, #f8eff5 36%, #eef2fb 55%, #edf2f9 90%, #e9f2f6 100%);
}
.titlebar-text { margin: 0; font-size: 15px; font-weight: 400; color: #000; }
.window-buttons { display: flex; align-self: stretch; margin-left: auto; }
.window-button { display: flex; align-items: center; justify-content: center; width: 70px; }
.window-glyph { width: 16px; height: 16px; fill: none; stroke: #000; stroke-width: 1.3; }

/* Menu and toolbar */
.menubar {
  display: flex;
  gap: 23px;
  height: 35px;
  padding: 1px 16px 0;
  border-bottom: 2px solid #bbb;
  background: #fff;
}
.menu { font-size: 16px; }
.toolbar {
  display: flex;
  align-items: center;
  gap: 1px;
  height: 34px;
  padding: 1px 2px 0;
  border-bottom: 1px solid #e4e4e4;
  background: #fff;
}
.tool { display: flex; align-items: center; justify-content: center; width: 34px; height: 32px; border: 1px solid transparent; }
.tool-on { border-color: #b5dcf6; background: #cce6fa; }
.tool-sep { width: 1px; height: 30px; margin: 0 7px 0 2px; background: #a8a8a8; }

/* Window frame */
.frame {
  display: flex;
  flex: 1;
  flex-direction: column;
  margin-top: 9px;
  padding: 0 5px 5px 6px;
  background: #a9a9a9;
}
.panes {
  display: flex;
  flex: 1;
  gap: 5px;
  padding: 0 3px 0 1px;
  border-top: 6px solid #b9cde2;
  background: #f5f5f5;
}

/* Console tree */
.tree-pane {
  display: flex;
  flex-direction: column;
  width: 284px;
  padding: 2px;
  border: 1px solid #828790;
  background: #fff;
}
.tree-view { flex: 1; overflow: hidden; font-size: 15px; }
.tree { padding: 1px 0 0 3px; }
.branch { padding-left: 0; margin-left: 2px; }
.branch .branch { margin-left: 28px; }
.branch .branch-leaf { margin-left: 54px; }
.node { display: flex; align-items: center; height: 27px; white-space: nowrap; }
.node > span { margin-left: 7px; }
.chev { width: 20px; height: 20px; margin-right: 8px; }
.node-selected { padding-left: 2px; background: #d9d9d9; }
.tree-scroll { padding: 9px 52px 9px 24px; background: #f0f0f0; }
.thumb { height: 7px; border-radius: 3px; background: #868686; }

/* Monitor */
.monitor {
  display: flex;
  flex: 1;
  flex-direction: column;
  min-width: 0;
  border: solid #777;
  border-width: 3px 0 0 2px;
  background: #f0f0f0;
}
.monitor-tools {
  display: flex;
  align-items: center;
  height: 43px;
  padding: 0 1px 3px;
  border-bottom: 2px solid #777;
}
.monitor-tools .tool-sep { margin: 0 10px 0 2px; }
.tool-caret { width: 23px; }
.caret { width: 18px; height: 9px; }

.chart {
  display: grid;
  flex: 1;
  grid-template: 1fr 63px / 67px 1fr;
  padding: 33px 61px 0 0;
}
.axis-y {
  display: flex;
  flex-direction: column;
  justify-content: space-between;
  margin-top: 8px;
}
.axis-y span {
  display: flex;
  align-items: center;
  justify-content: flex-end;
  gap: 4px;
  height: 0;
}
.axis-y span::after { width: 7px; height: 1px; background: #444; content: ""; }
.plot {
  display: flex;
  flex-direction: column;
  border: solid #777;
  border-width: 1px 0 1px 1px;
  background: #fff;
}
.hatch { border-right: 1px solid #777; border-bottom: 1px solid #444; }
.series { flex: 1; width: 100%; height: 0; border-right: 1px solid #f66; overflow: visible; }
.series polyline { fill: none; stroke: #e60a14; stroke-width: 1.6; vector-effect: non-scaling-stroke; }
.axis-x {
  display: grid;
  grid-column: 2;
  grid-template-columns: 42fr repeat(10, 40fr) 57fr 0;
}
.axis-x span {
  display: flex;
  flex-direction: column;
  align-items: center;
  gap: 5px;
  width: 1px;
  white-space: nowrap;
}
.axis-x span::before { flex: none; width: 1px; height: 6px; background: #444; content: ""; }

.stats { display: flex; justify-content: flex-end; gap: 17px; padding: 0 16px; }
.stat { display: flex; align-items: center; gap: 7px; }
.stat output {
  width: 154px;
  height: 26px;
  padding-right: 7px;
  border: 2px solid;
  border-color: #a0a0a0 #fff #fff #a0a0a0;
  line-height: 24px;
  text-align: right;
}
.stat .stat-duration { padding-right: 0; }
.blank { font-family: Inter, "Noto Sans", sans-serif; }

/* Counter list */
.legend { margin: 16px 16px 17px; border: 2px solid #828790; }
.counters { width: 100%; border-collapse: collapse; table-layout: fixed; }
.c-small { width: 104px; }
.c-mid { width: 130px; }
.c-wide { width: 261px; }
.counters th {
  height: 38px;
  padding: 0 0 0 9px;
  border-right: 1px solid #e5e5e5;
  background: #fff;
  font-size: 15px;
  font-weight: 400;
  text-align: left;
}
.counters th:last-child { border-right: 0; }
.counters td { height: 26px; padding: 0 0 0 6px; font-size: 16px; white-space: nowrap; }
.counters tbody { border-bottom: 1px solid #fafafa; }
.counters .color-cell { padding-right: 4px; }
.swatch { height: 2px; background: #e8393f; }
.check {
  display: block;
  width: 22px;
  height: 22px;
  margin: 0;
  padding: 2px;
  border: 2px solid;
  border-color: #777 #e8e8e8 #e8e8e8 #777;
  appearance: none;
  background: #fff;
}
.check:checked::before {
  display: block;
  width: 14px;
  height: 14px;
  background: #000;
  clip-path: polygon(10% 35%, 38% 62%, 90% 5%, 90% 38%, 38% 95%, 10% 68%);
  content: "";
}
.legend-scroll { padding: 8px 40px 9px 26px; }

/* Actions pane */
.actions {
  width: 281px;
  margin-left: 4px;
  border: solid #777;
  border-width: 3px 0 0 2px;
  background: #fff;
}
.actions-title {
  height: 31px;
  margin: 0 0 2px;
  padding-left: 8px;
  border-bottom: 1px solid #999;
  background: #f0f0f0;
  font-size: 17px;
  font-weight: 700;
  line-height: 34px;
}
.actions-group {
  display: flex;
  align-items: center;
  justify-content: space-between;
  width: 100%;
  height: 38px;
  padding: 0 10px 0 11px;
  background: linear-gradient(#b9d1ea, #98b4d4);
  font-size: 15px;
}
.actions-item {
  display: flex;
  align-items: center;
  justify-content: space-between;
  width: 100%;
  height: 35px;
  padding: 0 12px 0 47px;
}
.tri-up { width: 14px; height: 8px; }
.tri-right { width: 8px; height: 14px; }

/* Status bar */
.statusbar { display: flex; height: 36px; padding: 2px 0; border-top: 1px solid #dcdcdc; background: #f0f0f0; }
.status-main { flex: 1; }
.status-mid { width: 296px; border: solid #dcdcdc; border-width: 0 1px; }
.status-end { width: 190px; }
```
